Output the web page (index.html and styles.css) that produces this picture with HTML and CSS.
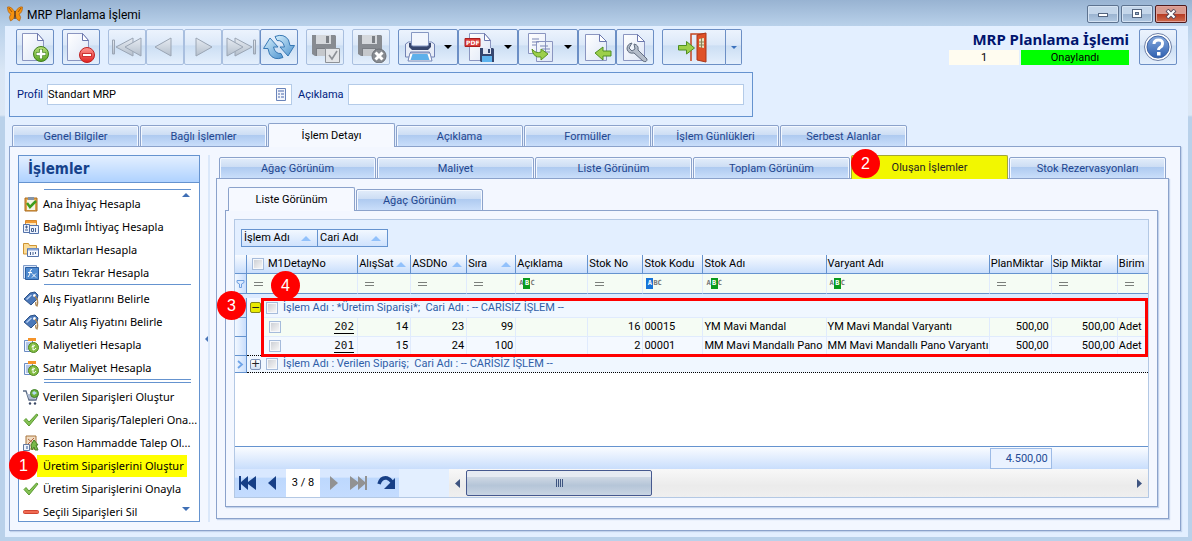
FILE: index.html
```html
<!DOCTYPE html>
<html lang="tr">
<head>
<meta charset="utf-8">
<title>MRP Planlama İşlemi</title>
<link rel="stylesheet" href="styles.css">
</head>
<body>
<svg class="defs" aria-hidden="true">
  <defs>
    <linearGradient id="gPage" x1="0" y1="0" x2="1" y2="1"><stop offset="0" stop-color="#fff"/><stop offset="1" stop-color="#dde6f6"/></linearGradient>
    <linearGradient id="gGrey" x1="0" y1="0" x2="0" y2="1"><stop offset="0" stop-color="#e6ebf2"/><stop offset="1" stop-color="#b4bfcc"/></linearGradient>
    <linearGradient id="gBlue" x1="0" y1="0" x2="1" y2="1"><stop offset="0" stop-color="#d5effc"/><stop offset="1" stop-color="#4f94cf"/></linearGradient>
    <linearGradient id="gGreen" x1="0" y1="0" x2="0" y2="1"><stop offset="0" stop-color="#b8e07a"/><stop offset="1" stop-color="#57a31f"/></linearGradient>
    <linearGradient id="gRed" x1="0" y1="0" x2="0" y2="1"><stop offset="0" stop-color="#ff9a94"/><stop offset="1" stop-color="#e01f1f"/></linearGradient>
    <linearGradient id="gHelp" x1="0" y1="0" x2="0" y2="1"><stop offset="0" stop-color="#86a9dd"/><stop offset="1" stop-color="#2f60b0"/></linearGradient>
    <symbol id="page" viewBox="0 0 32 32"><path d="M5.500 2.500h15l6 7v20h-21z" fill="url(#gPage)" stroke="#8a95c0"/><path d="M20.500 2.500v7h6z" fill="#fff" stroke="#6c78ae"/></symbol>
    <symbol id="tag" viewBox="0 0 16 16"><path d="M1 8l6-6 5-1 3 3-1 4-6 6z" fill="#4a77b8" stroke="#2d5288"/><circle cx="11.500" cy="4.500" r="1.500" fill="#fff"/><path d="M12 5q4 4 2 10-2-1-1-4" fill="none" stroke="#a98555" stroke-width="1.300"/><path d="M3.500 8.500l5-4.500" stroke="#b7d0f2" stroke-width="1.500"/></symbol>
    <symbol id="cost" viewBox="0 0 16 16"><path d="M1.500 3.500h8v11h-8z" fill="#eef4ff" stroke="#6b8cc4"/><path d="M3 6h5M3 8h4M3 10h3M3 12h3" stroke="#7897cc"/><path d="M5 1h8v3H5z" fill="#f5942a"/><circle cx="10.500" cy="10.500" r="5" fill="#82bc41" stroke="#4f8724"/><path d="M10 7.500v5.500q2 0 3-2M8.500 10l3.500-1.500" fill="none" stroke="#fff"/></symbol>
    <symbol id="tick" viewBox="0 0 16 16"><path d="M1 8.500l2-2 3 3.500 7.500-8 1.500 1-9 11z" fill="#86c255" stroke="#599a30"/></symbol>
  </defs>
</svg>

<div class="window">
  <header class="titlebar">
    <svg width="16" height="16" viewBox="0 0 16 16"><path d="M8 6Q4 0 .5 1q0 6 3.500 7-3 3-.5 7Q7 14 8 9q1 5 4.500 6 2.500-4-.5-7 3.500-1 3.500-7Q12 0 8 6z" fill="#f5920f" stroke="#a8590c" stroke-width=".6"/><path d="M8 5v8" stroke="#4a3020" stroke-width="1.300"/><path d="M2 2l3 4M14 2l-3 4" stroke="#7c3c04" stroke-width=".7"/></svg>
    <h1 class="titlebar-text">MRP Planlama İşlemi</h1>
    <div class="win-buttons">
      <button class="win-btn" aria-label="Simge durumuna küçült"><svg width="12" height="10"><rect x="1.500" y="4.500" width="9" height="3" fill="#fff" stroke="#53647e"/></svg></button>
      <button class="win-btn" aria-label="Önceki boyut"><svg width="12" height="10"><rect x="1.500" y=".5" width="9" height="8" fill="#fff" stroke="#53647e"/><rect x="4.500" y="3.500" width="3" height="2" fill="#9cb3d0" stroke="#53647e"/></svg></button>
      <button class="win-btn close" aria-label="Kapat"><svg width="12" height="10"><path d="M2 1l8 8M10 1L2 9" stroke="#53485a" stroke-width="4"/><path d="M2.500 1.500l7 7M9.500 1.500l-7 7" stroke="#fff" stroke-width="2.200"/></svg></button>
    </div>
  </header>

  <main class="client">
    <div class="toolbar">
      <button class="tool" aria-label="Yeni"><svg width="32" height="32"><use href="#page" width="32" height="32" x="-2"/><circle cx="22" cy="23" r="7.500" fill="url(#gGreen)" stroke="#3f7d1c"/><path d="M22 18v10M17 23h10" stroke="#4a8a22" stroke-width="4"/><path d="M22 18.500v9M17.500 23h9" stroke="#fff" stroke-width="2.400"/></svg></button>
      <button class="tool" aria-label="Sil"><svg width="32" height="32"><use href="#page" width="32" height="32" x="-3"/><circle cx="22" cy="24" r="7.500" fill="url(#gRed)" stroke="#c02020"/><rect x="17.500" y="22.500" width="9" height="3" fill="#fff" stroke="#c33"/></svg></button>
      <div class="tool-group">
        <button class="tool off" aria-label="İlk"><svg width="32" height="32"><path d="M1.500 9h2v14h-2z" fill="url(#gGrey)" stroke="#9aa5b4"/><path d="M5 16l17-9v18z" fill="url(#gGrey)" stroke="#9aa5b4"/><path d="M14 16l16-9v18z" fill="url(#gGrey)" stroke="#9aa5b4"/></svg></button>
        <button class="tool off" aria-label="Önceki"><svg width="32" height="32"><path d="M6 16l16-9v18z" fill="url(#gGrey)" stroke="#9aa5b4"/></svg></button>
        <button class="tool off" aria-label="Sonraki"><svg width="32" height="32"><path d="M25 16L9 7v18z" fill="url(#gGrey)" stroke="#9aa5b4"/></svg></button>
        <button class="tool off" aria-label="Son"><svg width="32" height="32"><path d="M28.500 9h2v14h-2z" fill="url(#gGrey)" stroke="#9aa5b4"/><path d="M27 16L10 7v18z" fill="url(#gGrey)" stroke="#9aa5b4"/><path d="M18 16L2 7v18z" fill="url(#gGrey)" stroke="#9aa5b4"/></svg></button>
        <button class="tool" aria-label="Yenile"><svg width="32" height="32"><path d="M12 5.500Q21 2 25.500 9L27 14.500h4.500L25 25l-8-9h4.500Q20 9 14 9.500z" fill="url(#gBlue)" stroke="#3979b4"/><path d="M20 26.500Q11 30 6.500 23L5 17.500H.5L7 7l8 9h-4.500q1.500 7 7.500 6.500z" fill="url(#gBlue)" stroke="#3979b4"/></svg></button>
      </div>
      <button class="tool off" aria-label="Kaydet ve onayla"><svg width="32" height="32"><path d="M3 4h23l1 1v20H6l-3-2z" fill="#878b91"/><path d="M7 4h15v9H7z" fill="#d5d8dc"/><path d="M17 5h3v7h-3zM7 17h14v8H7z" fill="#7a7e84"/><path d="M8 18h12v7H8z" fill="#c5c8cc"/><path d="M16.500 17.500h14v14h-14z" fill="#e3e5e8" stroke="#8d9197"/><path d="M20 24l3 4 5-8" fill="none" stroke="#8d9197" stroke-width="1.600"/></svg></button>
      <button class="tool off" aria-label="Kaydet ve kapat"><svg width="32" height="32"><path d="M3 4h23l1 1v20H6l-3-2z" fill="#878b91"/><path d="M7 4h15v9H7z" fill="#d5d8dc"/><path d="M17 5h3v7h-3zM7 17h14v8H7z" fill="#7a7e84"/><path d="M8 18h12v7H8z" fill="#c5c8cc"/><circle cx="24" cy="25" r="7" fill="#878b91" stroke="#6c7077"/><path d="M20.500 21.500l7 7M27.500 21.500l-7 7" stroke="#fff" stroke-width="3"/></svg></button>
      <div class="tool-group">
        <button class="tool drop" aria-label="Yazdır"><svg width="32" height="32"><path d="M1.500 13l3-2h23l3 2v13h-5v-5h-19v5h-5z" fill="#e8edf7" stroke="#7283b4"/><path d="M5 16v-4h22v4l-3 3H8z" fill="#37466e"/><path d="M7.500 1.500h17V14l-1 1h-15l-1-1z" fill="#f1f5fd" stroke="#8697c2"/><path d="M6 22h20l2 8H4z" fill="#fff" stroke="#7283b4"/><path d="M8.500 23h15l2 6h-19z" fill="#5db0ea"/></svg><i class="caret"></i></button>
        <button class="tool drop" aria-label="PDF olarak kaydet"><svg width="32" height="32"><use href="#page" width="32" height="32"/><path d="M1 7.500h15v8H1z" fill="#d93a37" stroke="#a82020"/><text class="pdf" x="2" y="14">PDF</text><path d="M16 17h13l1 1v13H17l-1-1z" fill="#35466f"/><path d="M19 17h8v6h-8z" fill="#dfe6f4"/><path d="M24 18h2v4h-2z" fill="#35466f"/><path d="M18 25h10v6H18z" fill="#5db3ee"/></svg><i class="caret"></i></button>
        <button class="tool drop" aria-label="Aktar"><svg width="32" height="32"><path d="M4.500 2.500h17v20h-17zM12.500 10.500h16v20h-16z" fill="url(#gPage)" stroke="#8a95c0"/><path d="M8 8h7M8 11h7M8 14h4M16 15h8M18 18h8M21 21h5" stroke="#7b87b5"/><path d="M8 18q4 5 9 3v-3l7 5-7 6v-3q-8 1-9-8z" fill="#9ccf4a" stroke="#5a9422"/></svg><i class="caret"></i></button>
        <button class="tool" aria-label="İçe al"><svg width="32" height="32"><path d="M4.500 3.500h14l7 7v19h-21z" fill="url(#gPage)" stroke="#8a95c0"/><path d="M18.500 3.500v7h7z" fill="#fff" stroke="#6c78ae"/><path d="M14 22l8-6v4h8v5h-8v4z" fill="#9ccf4a" stroke="#4f8f22"/></svg></button>
        <button class="tool" aria-label="Ayarlar"><svg width="32" height="32"><path d="M4.500 3.500h14l7 7v19h-21z" fill="url(#gPage)" stroke="#8a95c0"/><path d="M18.500 3.500v7h7z" fill="#fff" stroke="#6c78ae"/><path d="M13 12q-5 1-5 6 1 5 7 4l9 8q4 2 4-2l-9-9q1-5-4-6l1 5-3 2-3-3z" fill="#b4bdca" stroke="#616d80"/></svg></button>
      </div>
      <div class="tool-group split">
        <button class="tool wide" aria-label="Çıkış"><svg width="32" height="32"><path d="M13 30V3h14" fill="none" stroke="#c4451f" stroke-width="1.500"/><path d="M19 4l9-2v29l-9-2z" fill="#df5127" stroke="#a9371a"/><path d="M21 8l5-1v10l-5-1z" fill="#e6e3c0"/><path d="M23.500 7v10M21 11h5M21 14h5" stroke="#8a8157"/><path d="M.5 14.500h8v-4l8 6.500-8 6v-4h-8z" fill="#9ccf4a" stroke="#4f8f22"/></svg></button>
        <button class="tool slim" aria-label="Çıkış seçenekleri"><i class="caret small"></i></button>
      </div>
      <div class="doc-status">
        <h2 class="doc-title">MRP Planlama İşlemi</h2>
        <div class="doc-line"><span class="doc-no">1</span><span class="doc-state">Onaylandı</span></div>
      </div>
      <button class="tool" aria-label="Yardım"><svg width="32" height="32"><circle cx="16" cy="16" r="13.500" fill="#fff" stroke="#6d7fa6"/><circle cx="16" cy="16" r="11" fill="url(#gHelp)" stroke="#4165a5"/><path d="M12 13q0-4 4.500-4t4 4q0 2-2.500 3.500-1.500 1-1.500 2.500" fill="none" stroke="#fff" stroke-width="3"/><rect x="15" y="21" width="3.500" height="3.500" fill="#fff"/></svg></button>
    </div>

    <form class="filter-panel">
      <label for="profil">Profil</label>
      <div class="lookup"><input id="profil" type="text" value="Standart MRP"><button type="button" class="lookup-btn" aria-label="Profil seç"><svg width="12" height="13"><path d="M1.500.5h9v12h-9z" fill="#f2f5fb" stroke="#6a84ba"/><path d="M3 3h6M3 6h2M6 6h3M3 9h2M6 9h3" stroke="#8297c6" stroke-width="1.400"/></svg></button></div>
      <label for="aciklama">Açıklama</label>
      <input id="aciklama" class="field" type="text">
    </form>

    <nav class="tabs main-tabs">
      <button class="tab">Genel Bilgiler</button>
      <button class="tab">Bağlı İşlemler</button>
      <button class="tab active">İşlem Detayı</button>
      <button class="tab">Açıklama</button>
      <button class="tab">Formüller</button>
      <button class="tab">İşlem Günlükleri</button>
      <button class="tab">Serbest Alanlar</button>
    </nav>

    <section class="panel main-panel">
      <aside class="side">
        <h2 class="side-title">İşlemler</h2>
        <div class="side-list">
          <hr class="sep">
          <button class="item"><svg width="16" height="16"><path d="M2 2h12v13H2z" fill="#e2a44b" stroke="#a96a1e"/><path d="M4 4h8v10H4z" fill="#f5f2e6"/><path d="M5 1h6v3H5z" fill="#8494a8"/><path d="M4 7l3 4 6-6" fill="none" stroke="#3f9d1c" stroke-width="2.500"/></svg>Ana İhiyaç Hesapla</button>
          <button class="item"><svg width="16" height="16"><path d="M2.500 1.500h11v6h-11z" fill="#fde6bd" stroke="#d9892b"/><path d="M3 3h10" stroke="#f09a33" stroke-width="2"/><path d="M.5 5.500h6v8h-6zM6.500 6.500h9v8h-9z" fill="#edf3fe" stroke="#5574ab"/><path d="M2 8h3M2 11h3M3.500 6.500v3M12.500 9v4" stroke="#47618f"/><path d="M8.500 9.500h2v3h-2z" fill="none" stroke="#47618f"/></svg>Bağımlı İhtiyaç Hesapla</button>
          <button class="item"><svg width="16" height="16"><path d="M.5 12V1.500h5l1 2h7V12z" fill="#fbdc98" stroke="#cf9433"/><path d="M4.500 6.500h11v8h-11z" fill="#f5f8ff" stroke="#5574ab"/><path d="M5 7.500h10" stroke="#8aa6d8" stroke-width="2"/><path d="M7.500 10v3M10 10v3M12.500 10v2" stroke="#47618f"/></svg>Miktarları Hesapla</button>
          <button class="item"><svg width="16" height="16"><path d="M.5.5h13v13H.5z" fill="#dbe8fa" stroke="#7f9cca"/><path d="M2.500 2.500h13v12h-13z" fill="#4f8bd0" stroke="#2b5c9f"/><path d="M9 4.500Q7 4 7 7t-2 5M5 7.500h4M9 8.500l4 4M13 8.500l-4 4" fill="none" stroke="#fff"/></svg>Satırı Tekrar Hesapla</button>
          <hr class="sep">
          <button class="item"><svg width="16" height="16"><use href="#tag"/></svg>Alış Fiyatlarını Belirle</button>
          <button class="item"><svg width="16" height="16"><use href="#tag"/></svg>Satır Alış Fiyatını Belirle</button>
          <button class="item"><svg width="16" height="16"><use href="#cost"/></svg>Maliyetleri Hesapla</button>
          <button class="item"><svg width="16" height="16"><use href="#cost"/></svg>Satır Maliyet Hesapla</button>
          <hr class="sep double">
          <button class="item"><svg width="16" height="16"><path d="M0 2h3l3 9h7l2-6" fill="none" stroke="#5a6b86" stroke-width="1.300"/><path d="M4 5h10l-2 5H6z" fill="#aebcd2"/><circle cx="11.500" cy="4.500" r="4" fill="#6bb13c" stroke="#41802a"/><path d="M9 4l2-2 3 2-3 2z" fill="#b5dcf5"/><circle cx="7" cy="14.500" r="1.200" fill="#3b4866"/><circle cx="12" cy="14.500" r="1.200" fill="#3b4866"/></svg>Verilen Siparişleri Oluştur</button>
          <button class="item"><svg width="16" height="16"><use href="#tick"/></svg>Verilen Sipariş/Talepleri Ona...</button>
          <button class="item"><svg width="16" height="16"><path d="M3 1h10v13H3z" fill="#f0dcc2" stroke="#a8743d"/><path d="M5 4l6 5M11 3L5 9" stroke="#b2603c"/><path d="M.5 9.500h6v6h-6z" fill="#eef3fc" stroke="#62789f"/><path d="M3 11h2v3H3z" fill="#8da3c7"/><path d="M11 5l4 5h-2l2 5h-3l-1-3-2 3-1-5z" fill="#79b947" stroke="#487f23"/></svg>Fason Hammadde Talep Ol...</button>
          <button class="item marked"><svg width="16" height="16"><use href="#tick"/></svg><span class="marker">Üretim Siparişlerini Oluştur</span><b class="badge badge-1">1</b></button>
          <button class="item"><svg width="16" height="16"><use href="#tick"/></svg>Üretim Siparişlerini Onayla</button>
          <button class="item"><svg width="16" height="16"><rect y="6.500" x=".5" width="15" height="3" rx="1" fill="#f06a52" stroke="#d04430"/></svg>Seçili Siparişleri Sil</button>
        </div>
        <i class="scroll-mark up"></i>
        <i class="scroll-mark down"></i>
      </aside>

      <div class="splitter"><i></i></div>

      <div class="detail">
        <nav class="tabs sub-tabs">
          <button class="tab">Ağaç Görünüm</button>
          <button class="tab">Maliyet</button>
          <button class="tab">Liste Görünüm</button>
          <button class="tab">Toplam Görünüm</button>
          <button class="tab active yellow">Oluşan İşlemler<b class="badge badge-2">2</b></button>
          <button class="tab">Stok Rezervasyonları</button>
        </nav>
        <section class="panel sub-panel">
          <nav class="tabs inner-tabs">
            <button class="tab active">Liste Görünüm</button>
            <button class="tab">Ağaç Görünüm</button>
          </nav>
          <section class="panel inner-panel">
            <div class="grid">
              <div class="group-bar">
                <button class="group-chip first">İşlem Adı<i class="sort"></i></button><button class="group-chip">Cari Adı<i class="sort"></i></button>
              </div>
              <div class="rows">
                <table class="data">
                  <colgroup><col class="c-ind"><col class="c-exp"><col class="c-m1"><col class="c-alis"><col class="c-asd"><col class="c-sira"><col class="c-acik"><col class="c-sno"><col class="c-skod"><col class="c-sadi"><col class="c-var"><col class="c-plan"><col class="c-sip"><col class="c-bir"></colgroup>
                  <thead>
                    <tr class="head">
                      <th></th>
                      <th colspan="2"><label class="check-head"><input type="checkbox">M1DetayNo</label></th>
                      <th><div class="th"><span>AlışSat</span><i class="sort"></i></div></th>
                      <th><div class="th"><span>ASDNo</span><i class="sort"></i></div></th>
                      <th><div class="th"><span>Sıra</span><i class="sort"></i></div></th>
                      <th>Açıklama</th><th>Stok No</th><th>Stok Kodu</th><th>Stok Adı</th><th>Varyant Adı</th><th>PlanMiktar</th><th>Sip Miktar</th><th>Birim</th>
                    </tr>
                    <tr class="filters">
                      <td class="ind"><svg width="9" height="10"><path d="M1 1.500h7v2L5.500 5v3.500h-2V5L1 3.500z" fill="#dcebff" stroke="#6e9fe0"/></svg></td>
                      <td colspan="2"><i class="eq"></i></td><td><i class="eq"></i></td><td><i class="eq"></i></td><td><i class="eq"></i></td>
                      <td><span class="abc">A<b>B</b>C</span></td><td><i class="eq"></i></td>
                      <td><span class="abc blue"><b>A</b>BC</span></td><td><span class="abc">A<b>B</b>C</span></td><td><span class="abc">A<b>B</b>C</span></td>
                      <td><i class="eq"></i></td><td><i class="eq"></i></td><td><i class="eq"></i></td>
                    </tr>
                    <tr class="strip"><td class="ind"></td><td colspan="13"></td></tr>
                  </thead>
                  <tbody>
                    <tr class="group">
                      <td class="ind"></td><td class="exp"><button class="expander open" aria-label="Daralt">−</button></td>
                      <td colspan="12"><label><input type="checkbox">İşlem Adı : *Üretim Siparişi*;&nbsp; Cari Adı : -- CARİSİZ İŞLEM --</label></td>
                    </tr>
                    <tr class="row odd">
                      <td class="ind"></td><td class="exp"></td>
                      <td><div class="key"><input type="checkbox" aria-label="202 seç"><a href="#">202</a></div></td>
                      <td class="num">14</td><td class="num">23</td><td class="num">99</td><td></td><td class="num">16</td><td>00015</td><td>YM Mavi Mandal</td><td>YM Mavi Mandal Varyantı</td><td class="num">500,00</td><td class="num">500,00</td><td>Adet</td>
                    </tr>
                    <tr class="row even">
                      <td class="ind"></td><td class="exp"></td>
                      <td><div class="key"><input type="checkbox" aria-label="201 seç"><a href="#">201</a></div></td>
                      <td class="num">15</td><td class="num">24</td><td class="num">100</td><td></td><td class="num">2</td><td>00001</td><td>MM Mavi Mandallı Pano</td><td>MM Mavi Mandallı Pano Varyantı</td><td class="num">500,00</td><td class="num">500,00</td><td>Adet</td>
                    </tr>
                    <tr class="group focused">
                      <td class="ind"><svg width="7" height="9"><path d="M1 1l4 3.500L1 8" fill="none" stroke="#6fa4e8" stroke-width="1.800"/></svg></td><td class="exp"><button class="expander" aria-label="Genişlet">+</button></td>
                      <td colspan="12"><label><input type="checkbox">İşlem Adı : Verilen Sipariş;&nbsp; Cari Adı : -- CARİSİZ İŞLEM --</label></td>
                    </tr>
                  </tbody>
                </table>
                <div class="red-frame"></div>
                <b class="badge badge-3">3</b>
                <b class="badge badge-4">4</b>
              </div>
              <table class="data totals">
                <colgroup><col class="c-ind"><col class="c-exp"><col class="c-m1"><col class="c-alis"><col class="c-asd"><col class="c-sira"><col class="c-acik"><col class="c-sno"><col class="c-skod"><col class="c-sadi"><col class="c-var"><col class="c-plan"><col class="c-sip"><col class="c-bir"></colgroup>
                <tbody><tr><td colspan="11"></td><td class="sum"><div>4.500,00</div></td><td colspan="2"></td></tr></tbody>
              </table>
              <div class="navbar">
                <div class="pager">
                  <button aria-label="İlk kayıt"><svg width="20" height="16"><path d="M1 1h2v6l7-6v6l8-6v14l-8-6v6L3 9v6H1z" fill="#173f86"/></svg></button>
                  <button aria-label="Önceki kayıt"><svg width="10" height="16"><path d="M9 1v14L1 8z" fill="#173f86"/></svg></button>
                  <span class="pos">3 / 8</span>
                  <button aria-label="Sonraki kayıt"><svg width="10" height="16"><path d="M1 1v14l8-7z" fill="#929292"/></svg></button>
                  <button aria-label="Son kayıt"><svg width="20" height="16"><path d="M19 1h-2v6l-7-6v6L2 1v14l8-6v6l7-6v6h2z" fill="#929292"/></svg></button>
                  <button aria-label="Yinele"><svg width="20" height="16"><path d="M2 9Q4 2 10 3q3 1 5 4" fill="none" stroke="#173f86" stroke-width="3.500"/><path d="M18 3v11H7z" fill="#173f86"/></svg></button>
                </div>
                <div class="scrollbar">
                  <button class="sb-arrow" aria-label="Sola kaydır"><svg width="5" height="9"><path d="M5 0v9L0 4.500z" fill="#3e5480"/></svg></button>
                  <div class="track"><div class="thumb"><i></i><i></i><i></i><i></i></div></div>
                  <button class="sb-arrow" aria-label="Sağa kaydır"><svg width="5" height="9"><path d="M0 0v9l5-4.500z" fill="#3e5480"/></svg></button>
                </div>
              </div>
            </div>
          </section>
        </section>
      </div>
    </section>
  </main>
</div>
</body>
</html>
```
FILE: styles.css
```css
* { box-sizing: border-box; }

body {
  margin: 0;
  font-family: Roboto, "Noto Sans", "Liberation Sans", sans-serif;
  font-size: 11px;
  line-height: 14px;
  color: #000;
}

button, input { font: inherit; color: inherit; padding: 0; margin: 0; }
button { border: 0; background: none; }
svg { display: block; flex: none; }
h1, h2 { margin: 0; }
.defs { position: absolute; width: 0; height: 0; }

/* window frame */
.window {
  display: flex;
  flex-direction: column;
  height: 100vh;
  min-height: 500px;
  padding: 0 4px 4px 5px;
  background: linear-gradient(#98b3d2, #b9d1ea 26px, #d9e6f5 70px, #dbe7f5 115px, #b9d1ea 117px);
  overflow: hidden;
}

.titlebar {
  display: flex;
  align-items: center;
  gap: 4px;
  height: 26px;
  margin: 0 -4px 0 -5px;
  padding: 2px 5px 0 7px;
  background: linear-gradient(#98b3d2, #b9d1ea);
}
.titlebar-text { flex: 1; padding-top: 2px; font-size: 12px; font-weight: normal; }
.win-buttons { display: flex; gap: 2px; }
.win-btn {
  display: flex;
  align-items: center;
  justify-content: center;
  width: 32px;
  height: 18px;
  border: 1px solid #5d7390;
  border-radius: 2px;
  box-shadow: inset 0 0 0 1px #d5e3f3;
  background: linear-gradient(#c4d6ea 50%, #9ab3d0 50%, #b2c9e2);
}
.win-btn.close {
  border-color: #4f1a1c;
  box-shadow: inset 0 0 0 1px #e2a39b;
  background: linear-gradient(#d89a8f 50%, #b63a22 50%, #cf6b4c);
}

.client {
  flex: 1;
  min-height: 0;
  display: flex;
  flex-direction: column;
  padding: 3px 7px 6px 4px;
  background: #e3efff;
}

/* toolbar */
.toolbar { display: flex; align-items: flex-start; gap: 8px; padding: 0 4px 0 7px; height: 43px; }
.tool-group { display: flex; }
.tool {
  display: flex;
  align-items: center;
  justify-content: center;
  width: 38px;
  height: 36px;
  border: 1px solid #6c8fc5;
  border-radius: 2px;
  background: linear-gradient(#ecf3fd, #dbe8f8 45%, #cbdef3 46%, #e4effc);
}
.tool.off { border-color: #a9bfdf; }
.tool.drop { width: 60px; gap: 8px; justify-content: flex-start; padding-left: 5px; }
.tool.wide { width: 64px; border-radius: 2px 0 0 2px; }
.tool.slim { width: 16px; border-left: 0; border-radius: 0 2px 2px 0; }
.pdf { font: bold 6px "DejaVu Sans", sans-serif; fill: #fff; }
.caret { border: 4px solid transparent; border-top-color: #000; border-bottom: 0; }
.caret.small { border-width: 3px; border-top-color: #3c72bd; border-bottom: 0; }

.doc-status { flex: 1; display: flex; flex-direction: column; align-items: flex-end; gap: 1px; margin-right: 2px; }
.doc-title { font-family: "Noto Sans", sans-serif; font-size: 15px; line-height: 20px; color: #00146e; }
.doc-line { display: flex; gap: 2px; line-height: 15px; text-align: center; }
.doc-no { width: 70px; background: #fffcf0; }
.doc-state { width: 108px; background: #0f0; }

/* profile form */
.filter-panel {
  display: flex;
  align-items: center;
  width: 744px;
  height: 45px;
  padding: 0 8px 0 7px;
  border: 1px solid #6593cf;
  color: #00217e;
}
.filter-panel label:first-child { width: 30px; }
.lookup, .field { height: 21px; border: 1px solid #b4cbe8; background: #fff; color: #000; }
.lookup { display: flex; align-items: center; width: 245px; margin-right: 6px; padding-right: 4px; }
.lookup input { flex: 1; min-width: 0; border: 0; outline: 0; background: none; }
.field { flex: 1; margin-left: 4px; min-width: 0; }

/* tabs */
.tabs { position: relative; z-index: 1; display: flex; align-items: flex-end; gap: 1px; margin-bottom: -1px; }
.tab {
  height: 22px;
  padding: 2px 0 0;
  border: 1px solid #8ba2cb;
  border-radius: 2px 2px 0 0;
  background: linear-gradient(#e3edfa, #ccddf4 45%, #aecaf0 46%, #c9defa);
  box-shadow: inset 1px 1px 0 #f3f8ff, inset -1px 0 0 #f3f8ff;
  color: #1f468f;
}
.tab.active {
  height: 24px;
  padding: 0;
  border-bottom: 0;
  background: #f6f9ff;
  box-shadow: none;
  color: #000;
}
.tab.yellow { position: relative; background: #f2f700; border-color: #a2a636; color: #222; }
.main-tabs { margin-top: 6px; padding-left: 3px; }
.main-tabs .tab, .inner-tabs .tab { width: 127px; }
.sub-tabs { padding: 0 3px; }
.sub-tabs .tab { flex: 1; }

.panel { border: 1px solid #8ba2cb; background: #f3f7ff; box-shadow: 1px 1px 1px #c3d3ec; }
.main-panel { flex: 1; min-height: 0; display: flex; padding: 8px 11px 8px 8px; }
.detail { flex: 1; min-width: 0; display: flex; flex-direction: column; margin-bottom: 3px; }
.sub-panel { flex: 1; min-height: 0; display: flex; flex-direction: column; padding: 8px 10px 11px 8px; }
.inner-tabs { padding-left: 3px; }
.inner-panel { flex: 1; min-height: 0; display: flex; padding: 8px; }

/* side list */
.side { position: relative; display: flex; flex-direction: column; width: 182px; border: 1px solid #6593cf; background: #fff; }
.side-title {
  height: 27px;
  padding-left: 9px;
  border-bottom: 1px solid #6593cf;
  background: linear-gradient(#e3efff, #afd2ff);
  font-family: "DejaVu Sans Condensed", "DejaVu Sans", sans-serif;
  font-size: 15px;
  line-height: 26px;
  color: #15428b;
}
.side-list { flex: 1; min-height: 0; padding-top: 6px; overflow-x: visible; overflow-y: clip; }
.sep { height: 1px; margin: 0 8px 2px 25px; border: 0; background: #6593cf; }
.sep.double { height: 4px; background: none; border: solid #6593cf; border-width: 1px 0; }
.item {
  position: relative;
  display: flex;
  align-items: center;
  gap: 4px;
  width: 100%;
  height: 23px;
  padding-left: 4px;
  font-family: "Noto Sans", "Liberation Sans", sans-serif;
  white-space: nowrap;
}
.marker { height: 22px; line-height: 22px; padding-right: 3px; background: #ff0; box-shadow: -6px 0 0 #ff0; }
.scroll-mark { position: absolute; right: 9px; border: 4px solid transparent; }
.scroll-mark.up { top: 37px; border-top: 0; border-bottom-color: #3f6fb5; }
.scroll-mark.down { bottom: 10px; border-bottom: 0; border-top-color: #3f6fb5; }

.splitter { display: flex; align-items: center; width: 5px; margin: 0 6px 0 5px; border-right: 2px solid #dbe8fa; }
.splitter i { border: 3px solid transparent; border-left: 0; border-right-color: #4a76b8; }

.badge {
  position: absolute;
  z-index: 3;
  width: 29px;
  height: 29px;
  border-radius: 50%;
  background: #f00;
  color: #fff;
  font: 16px/29px "Liberation Sans", sans-serif;
  text-align: center;
}
.badge-1 { left: -10px; top: -3px; }
.badge-2 { left: -1px; top: -7px; }
.badge-3 { left: -18px; top: 36px; }
.badge-4 { left: 36px; top: 16px; }

/* data grid */
.grid { flex: 1; min-width: 0; display: flex; flex-direction: column; border: 1px solid #b3c8e4; background: #fff; }
.group-bar { display: flex; height: 35px; padding: 9px 6px 0; background: #e3efff; }
.group-chip {
  display: flex;
  align-items: center;
  justify-content: space-between;
  width: 70px;
  height: 18px;
  padding: 0 6px 0 2px;
  border: 1px solid #6593cf;
  border-left: 0;
  background: linear-gradient(#f2f8ff, #cfe2fd);
}
.group-chip.first { width: 77px; border-left: 1px solid #6593cf; }
.sort { flex: none; border: 5px solid transparent; border-top: 0; border-bottom: 5px solid #92c1fb; }

.rows { position: relative; flex: 1; min-height: 0; }
.data { width: 100%; table-layout: fixed; border-collapse: separate; border-spacing: 0; }
.c-ind { width: 12px; } .c-exp { width: 16px; } .c-m1 { width: 95px; } .c-alis { width: 53px; }
.c-asd { width: 56px; } .c-sira { width: 49px; } .c-acik { width: 72px; } .c-sno { width: 55px; }
.c-skod { width: 60px; } .c-sadi { width: 123px; } .c-var { width: 163px; } .c-plan { width: 62px; }
.c-sip { width: 66px; } .c-bir { width: 30px; }
.data th, .data td { padding: 0 1px; border-right: 1px solid #e0ebfd; white-space: nowrap; text-align: left; font-weight: normal; overflow: hidden; }
.data th {
  height: 19px;
  border-right-color: #6593cf;
  border-bottom: 1px solid #6593cf;
  background: linear-gradient(#f8fbff, #c9defc);
}
.data th:last-child, .data td:last-child { border-right: 0; }
.th { display: flex; align-items: center; justify-content: space-between; padding-right: 3px; }
.th span { overflow: hidden; }
.data td.ind { padding: 0 1px; border-right-color: #6593cf; background: linear-gradient(90deg, #f2f8ff, #c9defc); }
.data label { display: flex; align-items: center; gap: 5px; }
.data .check-head { gap: 4px; padding-left: 4px; }
.data input {
  flex: none;
  appearance: none;
  width: 12px;
  height: 12px;
  border: 1px solid #a5bbdb;
  background: linear-gradient(135deg, #c9ccd2, #fafafa);
  box-shadow: inset 0 0 0 1px #f6f8fb;
}
.filters td { height: 20px; border-bottom: 1px solid #6593cf; background: #f5fcf4; }
.eq { display: block; width: 9px; height: 4px; margin-left: 6px; border: solid #7b7f7b; border-width: 1px 0; }
.abc { display: flex; align-items: center; padding-left: 2px; font: bold 7px/11px "DejaVu Sans Mono", monospace; color: #777; }
.abc b { width: 7px; text-align: center; background: #0a9a1c; color: #fff; }
.abc.blue b { background: #1673d8; }
.data .strip td { height: 4px; background: #dcebff; border-right: 0; }

.data .group td { height: 19px; padding-left: 3px; border-right: 0; background: #f0f7ff; color: #2f5ea8; }
.data .group .exp { padding: 0; }
.data .group .ind { padding: 0 2px; border-right: 1px solid #6593cf; background: linear-gradient(90deg, #f2f8ff, #c9defc); }
.data .exp { border-right: 0; }
.expander {
  display: block;
  width: 11px;
  height: 11px;
  margin-left: 3px;
  border: 1px solid #7c92b8;
  border-radius: 2px;
  background: linear-gradient(#fff, #d2e0f2);
  color: #222;
  font: 11px/8px "DejaVu Sans", sans-serif;
}
.expander.open { background: #e8ea00; border-color: #83861d; }
.row td { height: 19px; border-top: 1px solid #e0ebfd; }
.row.odd td { background: #f5fcf4; }
.row.even td { background: #f4f9ff; }
.data .row .exp { background: #f0f7ff; border-top: 0; }
.data .row .ind { border-top-color: #6593cf; background: linear-gradient(90deg, #f2f8ff, #c9defc); }
.data .num { padding-right: 2px; text-align: right; }
.key { display: flex; align-items: center; justify-content: space-between; padding: 0 2px 0 5px; }
.key a { color: #111; text-decoration: none; border-bottom: 1px solid #000; font: 11px/12px "DejaVu Sans Mono", monospace; }
.data .focused td { height: 18px; border-top: 1px dotted #000; border-bottom: 1px dotted #000; }
.data .focused .ind { border-color: #6593cf; border-style: solid; border-left: 0; }

.red-frame { position: absolute; left: 26px; right: 0; top: 43px; height: 59px; border: 3px solid #f00; }

.totals td { height: 23px; border-right: 0; border-top: 1px solid #6593cf; background: linear-gradient(#fafcff, #c9defc); }
.data.totals .sum { padding: 0; }
.sum div { height: 21px; padding-right: 3px; border: 1px solid #9dbbe6; background: #eaf2ff; line-height: 19px; text-align: right; color: #234a96; }

.navbar { display: flex; gap: 50px; height: 28px; background: #e3efff; }
.pager { display: flex; align-items: center; width: 164px; padding-left: 3px; gap: 9px; background: linear-gradient(#d9e8ff 30%, #bdd8fd 31%, #c4dcff); }
.pager .pos { width: 34px; height: 28px; background: #fff; line-height: 28px; text-align: center; }
.scrollbar { flex: 1; display: flex; align-items: stretch; background: linear-gradient(#f8f8f8, #ebebeb 60%, #efefef); }
.sb-arrow { display: flex; align-items: center; justify-content: center; width: 17px; }
.track { flex: 1; padding: 1px 0; }
.thumb {
  display: flex;
  align-items: center;
  justify-content: center;
  gap: 1px;
  width: 28%;
  height: 26px;
  border: 1px solid #46598f;
  border-radius: 2px;
  background: linear-gradient(#e6ebf2 25%, #cdd7e3 27%, #b5c5d8 60%, #c9d5e3);
}
.thumb i { width: 1px; height: 8px; background: #3e5480; }
```
